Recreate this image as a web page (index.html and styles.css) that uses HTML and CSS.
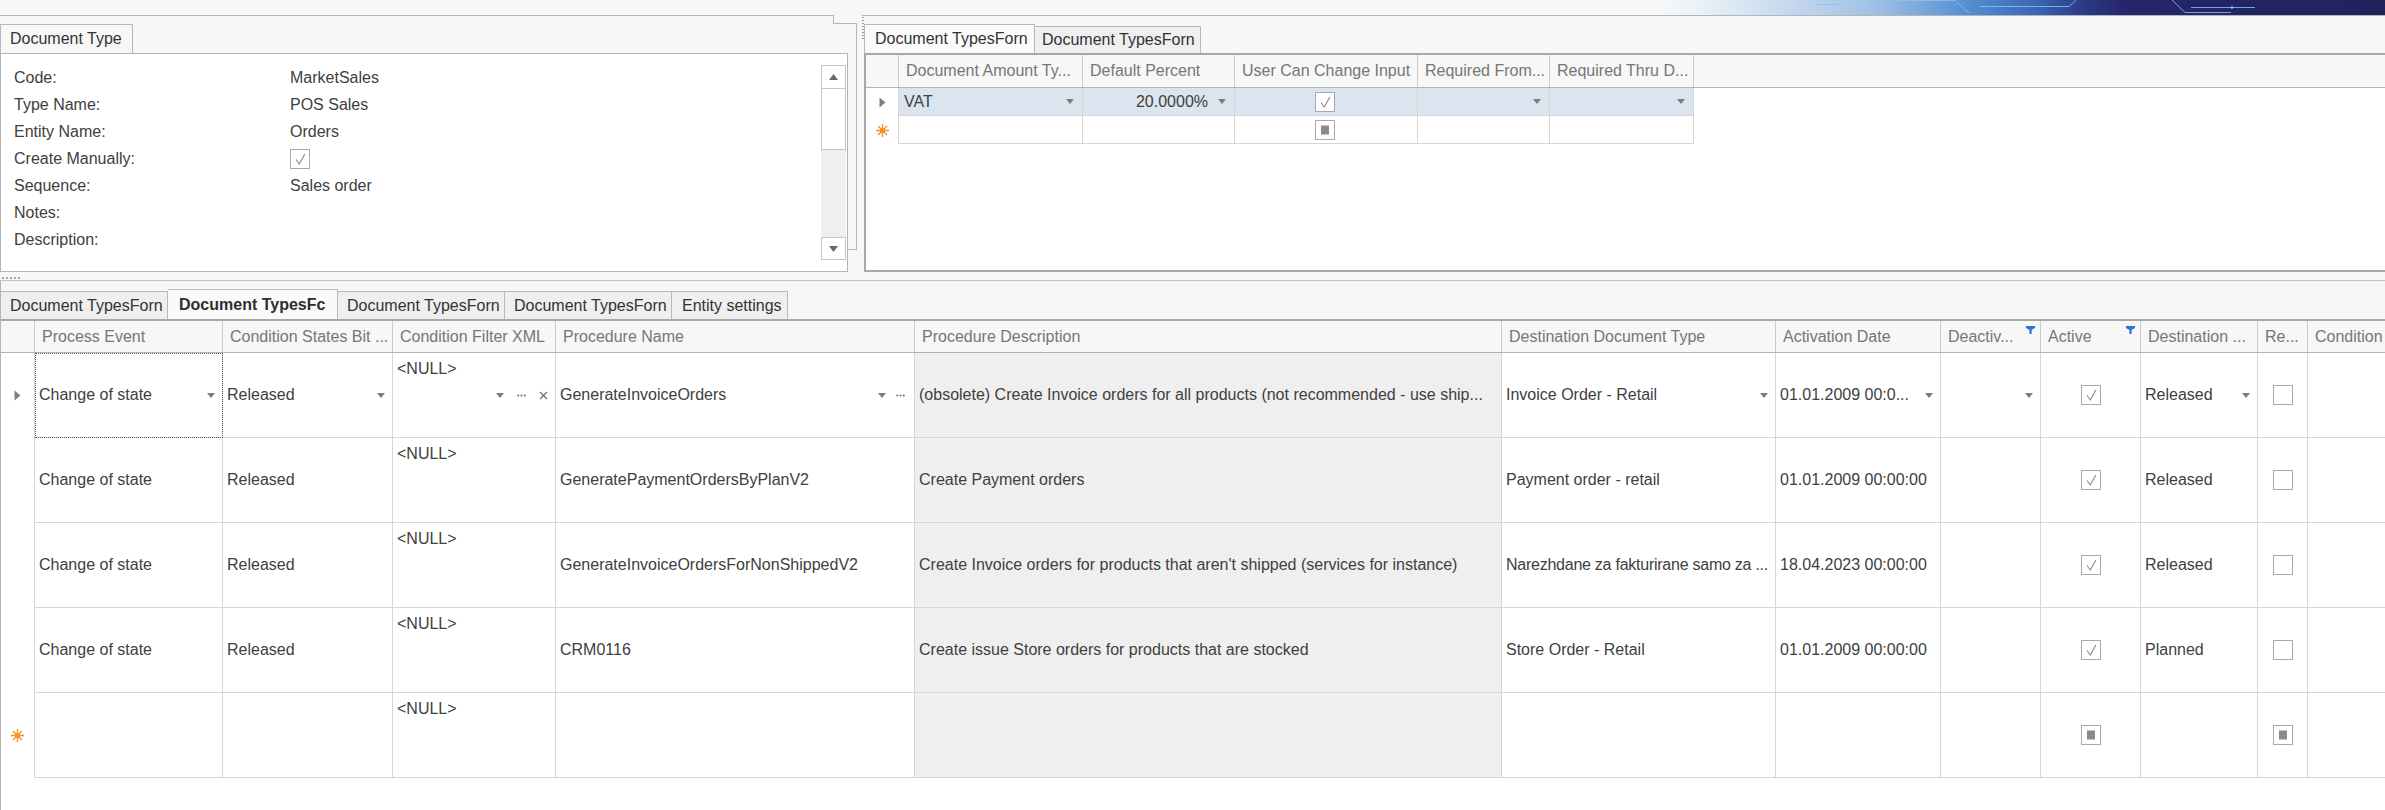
FILE: index.html
```html
<!DOCTYPE html>
<html>
<head>
<meta charset="utf-8">
<title>Document Type</title>
<link rel="stylesheet" href="styles.css">
</head>
<body>
<svg class="defs" width="0" height="0">
  <defs>
    <symbol id="dd" viewBox="0 0 8 5"><path d="M0 0H8L4 5Z" fill="#7d7d7d"/></symbol>
    <symbol id="dots" viewBox="0 0 9 3"><circle cx="1.2" cy="1.5" r="1" fill="#6a6a6a"/><circle cx="4.5" cy="1.5" r="1" fill="#6a6a6a"/><circle cx="7.8" cy="1.5" r="1" fill="#6a6a6a"/></symbol>
    <symbol id="xx" viewBox="0 0 9 9"><path d="M1 1L8 8M8 1L1 8" stroke="#6a6a6a" stroke-width="1.1" fill="none"/></symbol>
    <symbol id="chk" viewBox="0 0 20 20"><rect x="0.5" y="0.5" width="19" height="19" fill="#fff" stroke="#a9a9a9"/><path d="M6 10.5L9.3 15L14.8 5" fill="none" stroke="#8a8a8a" stroke-width="1.1"/></symbol>
    <symbol id="unchk" viewBox="0 0 20 20"><rect x="0.5" y="0.5" width="19" height="19" fill="#fff" stroke="#a9a9a9"/></symbol>
    <symbol id="ind" viewBox="0 0 20 20"><rect x="0.5" y="0.5" width="19" height="19" fill="#fff" stroke="#a9a9a9"/><rect x="6" y="5.5" width="8" height="9" fill="#8a8a8a"/></symbol>
    <symbol id="tri" viewBox="0 0 7 11"><path d="M0.5 0.5L6.5 5.5L0.5 10.5Z" fill="#808080"/></symbol>
    <symbol id="star" viewBox="0 0 13 13"><g stroke="#f5922a" stroke-width="1.4"><path d="M6.5 0V13M0 6.5H13M2 2L11 11M11 2L2 11"/></g><circle cx="6.5" cy="6.5" r="2.6" fill="#f5922a"/></symbol>
    <symbol id="funnel" viewBox="0 0 9 8"><path d="M0 0H9V2L5.6 4V8H3.4V4L0 2Z" fill="#2b78c9"/></symbol>
  </defs>
</svg>

<div class="topbar">
  <div class="topbar-fill"></div>
  <div class="banner">
    <svg width="727" height="15" viewBox="0 0 727 15">
      <defs>
        <linearGradient id="bgr" x1="0" x2="1" y1="0" y2="0">
          <stop offset="0" stop-color="#f7f7f7"/>
          <stop offset="0.06" stop-color="#eaf1f8"/>
          <stop offset="0.3" stop-color="#9fc0e4"/>
          <stop offset="0.42" stop-color="#5592d3"/>
          <stop offset="0.52" stop-color="#3b66b4"/>
          <stop offset="0.58" stop-color="#2b3d8a"/>
          <stop offset="0.64" stop-color="#25266b"/>
          <stop offset="1" stop-color="#21225c"/>
        </linearGradient>
      </defs>
      <rect width="727" height="15" fill="url(#bgr)"/>
      <g stroke="#8fc3f0" stroke-width="1" fill="none" opacity="0.8">
        <path d="M158 4.5H182"/>
        <path d="M236 0.5H297L311 13"/>
        <path d="M322 6.5H411L418 0"/>
        <path d="M514 0L527 12.5H573"/>
        <path d="M533 7.5H597"/>
      </g>
      <circle cx="574" cy="7.5" r="1.3" fill="#8fc3f0"/>
    </svg>
  </div>
</div>

<div class="top">
  <div class="lg">
    <div class="lg-head"><div class="lg-head-l"></div><div class="lg-head-r"></div></div>
    <div class="lg-body">
      <div class="lg-main">
        <div class="tabstrip lg-tabs"><div class="tab tab-doc">Document Type</div></div>
        <div class="form-page">
          <div class="form">
            <div class="frow"><span class="flabel">Code:</span><span class="fval">MarketSales</span></div>
            <div class="frow"><span class="flabel">Type Name:</span><span class="fval">POS Sales</span></div>
            <div class="frow"><span class="flabel">Entity Name:</span><span class="fval">Orders</span></div>
            <div class="frow"><span class="flabel">Create Manually:</span><span class="fval"><svg class="cb"><use href="#chk"/></svg></span></div>
            <div class="frow"><span class="flabel">Sequence:</span><span class="fval">Sales order</span></div>
            <div class="frow"><span class="flabel">Notes:</span><span class="fval"></span></div>
            <div class="frow"><span class="flabel">Description:</span><span class="fval"></span></div>
          </div>
          <div class="vscroll">
            <div class="sb-btn sb-up"><svg width="9" height="6" viewBox="0 0 9 6"><path d="M0 6H9L4.5 0Z" fill="#6a6a6a"/></svg></div>
            <div class="sb-thumb"></div>
            <div class="sb-track"></div>
            <div class="sb-btn sb-down"><svg width="9" height="6" viewBox="0 0 9 6"><path d="M0 0H9L4.5 6Z" fill="#6a6a6a"/></svg></div>
          </div>
        </div>
      </div>
      <div class="lg-edge"></div>
    </div>
  </div>

  <div class="vsplit"></div>

  <div class="rg">
    <div class="rg-grip"></div>
    <div class="rg-main">
      <div class="tabstrip rg-tabs">
        <div class="tab rg-tab1">Document TypesForn</div>
        <div class="tab rg-tab2">Document TypesForn</div>
      </div>
      <div class="rg-page">
        <div class="tg tg-head">
          <div></div>
          <div>Document Amount Ty...</div>
          <div>Default Percent</div>
          <div>User Can Change Input</div>
          <div>Required From...</div>
          <div>Required Thru D...</div>
          <div class="fill"></div>
        </div>
        <div class="tg tg-row sel">
          <div class="ind"><svg class="tri"><use href="#tri"/></svg></div>
          <div class="ed"><span class="txt">VAT</span><svg class="dd"><use href="#dd"/></svg></div>
          <div class="ed"><span class="txt right">20.0000%</span><svg class="dd"><use href="#dd"/></svg></div>
          <div class="center"><svg class="cb"><use href="#chk"/></svg></div>
          <div class="ed"><span class="txt"></span><svg class="dd"><use href="#dd"/></svg></div>
          <div class="ed"><span class="txt"></span><svg class="dd"><use href="#dd"/></svg></div>
          <div class="fill"></div>
        </div>
        <div class="tg tg-row">
          <div class="ind"><svg class="star"><use href="#star"/></svg></div>
          <div></div>
          <div></div>
          <div class="center"><svg class="cb"><use href="#ind"/></svg></div>
          <div></div>
          <div></div>
          <div class="fill"></div>
        </div>
      </div>
    </div>
  </div>
</div>

<div class="hsplit"><div class="grip-h"></div></div>

<div class="bottom">
  <div class="tabstrip btabs">
    <div class="tab btab bt1">Document TypesForn</div>
    <div class="tab btab bt2 active">Document TypesFc</div>
    <div class="tab btab bt3">Document TypesForn</div>
    <div class="tab btab bt4">Document TypesForn</div>
    <div class="tab btab bt5">Entity settings</div>
  </div>
  <div class="bpage">
    <div class="bg bg-head">
      <div></div>
      <div>Process Event</div>
      <div>Condition States Bit ...</div>
      <div>Condition Filter XML</div>
      <div>Procedure Name</div>
      <div>Procedure Description</div>
      <div>Destination Document Type</div>
      <div>Activation Date</div>
      <div><span class="htxt">Deactiv...</span><svg class="funnel"><use href="#funnel"/></svg></div>
      <div><span class="htxt">Active</span><svg class="funnel"><use href="#funnel"/></svg></div>
      <div>Destination ...</div>
      <div>Re...</div>
      <div>Condition</div>
    </div>

    <div class="bg bg-row">
      <div class="ind"><svg class="tri"><use href="#tri"/></svg></div>
      <div class="ed focus"><span class="txt">Change of state</span><svg class="dd"><use href="#dd"/></svg></div>
      <div class="ed"><span class="txt">Released</span><svg class="dd"><use href="#dd"/></svg></div>
      <div class="cfx"><span class="nul">&lt;NULL&gt;</span><span class="eds"><svg class="dd"><use href="#dd"/></svg><svg class="dots"><use href="#dots"/></svg><svg class="xx"><use href="#xx"/></svg></span></div>
      <div class="ed pn"><span class="txt">GenerateInvoiceOrders</span><svg class="dd"><use href="#dd"/></svg><svg class="dots"><use href="#dots"/></svg></div>
      <div class="pd">(obsolete) Create Invoice orders for all products (not recommended - use ship...</div>
      <div class="ed"><span class="txt">Invoice Order - Retail</span><svg class="dd"><use href="#dd"/></svg></div>
      <div class="ed"><span class="txt">01.01.2009 00:0...</span><svg class="dd"><use href="#dd"/></svg></div>
      <div class="ed"><span class="txt"></span><svg class="dd"><use href="#dd"/></svg></div>
      <div class="center"><svg class="cb"><use href="#chk"/></svg></div>
      <div class="ed"><span class="txt">Released</span><svg class="dd"><use href="#dd"/></svg></div>
      <div class="center"><svg class="cb"><use href="#unchk"/></svg></div>
      <div></div>
    </div>

    <div class="bg bg-row">
      <div class="ind"></div>
      <div>Change of state</div>
      <div>Released</div>
      <div class="nullc">&lt;NULL&gt;</div>
      <div>GeneratePaymentOrdersByPlanV2</div>
      <div class="pd">Create Payment orders</div>
      <div>Payment order - retail</div>
      <div>01.01.2009 00:00:00</div>
      <div></div>
      <div class="center"><svg class="cb"><use href="#chk"/></svg></div>
      <div>Released</div>
      <div class="center"><svg class="cb"><use href="#unchk"/></svg></div>
      <div></div>
    </div>

    <div class="bg bg-row">
      <div class="ind"></div>
      <div>Change of state</div>
      <div>Released</div>
      <div class="nullc">&lt;NULL&gt;</div>
      <div>GenerateInvoiceOrdersForNonShippedV2</div>
      <div class="pd">Create Invoice orders for products that aren't shipped (services for instance)</div>
      <div class="tight">Narezhdane za fakturirane samo za ...</div>
      <div>18.04.2023 00:00:00</div>
      <div></div>
      <div class="center"><svg class="cb"><use href="#chk"/></svg></div>
      <div>Released</div>
      <div class="center"><svg class="cb"><use href="#unchk"/></svg></div>
      <div></div>
    </div>

    <div class="bg bg-row">
      <div class="ind"></div>
      <div>Change of state</div>
      <div>Released</div>
      <div class="nullc">&lt;NULL&gt;</div>
      <div>CRM0116</div>
      <div class="pd">Create issue Store orders for products that are stocked</div>
      <div>Store Order - Retail</div>
      <div>01.01.2009 00:00:00</div>
      <div></div>
      <div class="center"><svg class="cb"><use href="#chk"/></svg></div>
      <div>Planned</div>
      <div class="center"><svg class="cb"><use href="#unchk"/></svg></div>
      <div></div>
    </div>

    <div class="bg bg-row">
      <div class="ind"><svg class="star"><use href="#star"/></svg></div>
      <div></div>
      <div></div>
      <div class="nullc">&lt;NULL&gt;</div>
      <div></div>
      <div class="pd"></div>
      <div></div>
      <div></div>
      <div></div>
      <div class="center"><svg class="cb"><use href="#ind"/></svg></div>
      <div></div>
      <div class="center"><svg class="cb"><use href="#ind"/></svg></div>
      <div></div>
    </div>
  </div>
</div>
</body>
</html>
```
FILE: styles.css
```css
* { box-sizing: border-box; }
html, body { margin: 0; padding: 0; }
body {
  width: 2385px;
  height: 810px;
  overflow: hidden;
  background: #f7f7f7;
  font-family: "Liberation Sans", Arial, sans-serif;
  font-size: 16px;
  line-height: 18px;
  color: #404040;
}
svg { display: block; flex: none; }
.defs { position: absolute; width: 0; height: 0; overflow: hidden; }

/* top banner strip */
.topbar { display: flex; height: 15px; }
.topbar-fill { flex: 1; }
.banner { width: 727px; height: 15px; }

/* top area */
.top { display: flex; height: 257px; }

.lg { width: 857px; display: flex; flex-direction: column; }
.lg-head { display: flex; height: 9px; flex: none; }
.lg-head-l { width: 834px; border-top: 1px solid #b5b5b5; border-right: 1px solid #b5b5b5; }
.lg-head-r { flex: 1; border-bottom: 1px solid #b5b5b5; }
.lg-body { display: flex; flex: 1; }
.lg-main { width: 848px; display: flex; flex-direction: column; }
.lg-edge { width: 9px; height: 226px; border-right: 1px solid #b5b5b5; border-bottom: 1px solid #b5b5b5; }

.tabstrip { display: flex; align-items: flex-end; flex: none; }
.tab {
  display: flex;
  align-items: center;
  white-space: nowrap;
  overflow: hidden;
  border: 1px solid #b8b8b8;
  border-bottom: none;
  color: #333;
}
.lg-tabs { height: 29px; }
.tab-doc { width: 133px; height: 29px; background: #f7f7f7; padding-left: 9px; }

.form-page { flex: 1; display: flex; background: #fff; border: 1px solid #b5b5b5; }
.form { flex: 1; padding: 10px 0 0 13px; }
.frow { display: flex; align-items: center; height: 27px; }
.flabel { width: 276px; flex: none; }
.fval { display: flex; align-items: center; }
.cb { width: 20px; height: 20px; }

.vscroll { width: 25px; margin: 11px 1px 11px 0; display: flex; flex-direction: column; }
.sb-btn { height: 24px; border: 1px solid #c6c6c6; background: #fff; display: flex; align-items: center; justify-content: center; flex: none; }
.sb-thumb { height: 61px; border: 1px solid #c6c6c6; border-top: none; background: #fff; flex: none; }
.sb-track { flex: 1; background: #efefef; }
.sb-down { height: 23px; }

/* right group */
.vsplit { width: 5px; flex: none; }
.rg { flex: 1; display: flex; border-top: 1px solid #b5b5b5; min-width: 0; }
.rg-grip {
  width: 2px;
  height: 23px;
  flex: none;
  background: radial-gradient(circle, #9a9a9a 0.9px, transparent 1.1px) 0 0 / 2px 3px repeat-y;
}
.rg-main { flex: 1; display: flex; flex-direction: column; padding-top: 8px; min-width: 0; }
.rg-tabs { height: 29px; }
.rg-tab1 { width: 171px; height: 29px; background: #fafafa; padding-left: 10px; }
.rg-tab2 { width: 166px; height: 27px; background: #efefef; border-left: none; padding-left: 7px; }
.rg-page {
  flex: 1;
  background: #fff;
  border-top: 2px solid #a8a8a8;
  border-left: 2px solid #a8a8a8;
  border-bottom: 2px solid #a8a8a8;
  overflow: hidden;
}

.tg { display: grid; grid-template-columns: 33px 184px 152px 183px 132px 144px 1fr; }
.tg-head { height: 33px; background: #f7f7f7; border-bottom: 1px solid #b3b3b3; }
.tg-head > div {
  border-right: 1px solid #cbcbcb;
  display: flex;
  align-items: center;
  padding-left: 7px;
  color: #767676;
  white-space: nowrap;
  overflow: hidden;
}
.tg-head > .fill { border-right: none; }
.tg-row { height: 28px; }
.tg-row > div {
  border-right: 1px solid #d6d6d6;
  border-bottom: 1px solid #d6d6d6;
  display: flex;
  align-items: center;
  padding: 0 8px 0 5px;
  white-space: nowrap;
  overflow: hidden;
}
.tg-row > .ind { border-bottom: none; justify-content: center; padding: 0; }
.tg-row > .fill { border: none; }
.tg-row.sel > div:not(.ind):not(.fill) { background: #dae5ef; }

.ed .txt { flex: 1; overflow: hidden; white-space: nowrap; }
.ed .txt.right { text-align: right; padding-right: 10px; }
.dd { width: 8px; height: 5px; }
.dots { width: 9px; height: 3px; }
.xx { width: 9px; height: 9px; }
.tri { width: 7px; height: 11px; }
.star { width: 13px; height: 13px; }
.funnel { width: 9px; height: 8px; }
.center { justify-content: center; }

/* splitter */
.hsplit { height: 8px; display: flex; align-items: flex-end; padding: 0 0 1px 1px; }
.grip-h {
  width: 20px;
  height: 2px;
  background: radial-gradient(circle, #a8a8a8 0.9px, transparent 1.1px) 0 0 / 4px 2px repeat-x;
}

/* bottom group */
.bottom {
  border-top: 1px solid #c3c3c3;
  border-left: 1px solid #b5b5b5;
  padding-top: 8px;
  height: 530px;
  display: flex;
  flex-direction: column;
}
.btabs { height: 30px; }
.btab { height: 28px; background: #efefef; border-left: none; }
.btab.active { height: 30px; background: #fafafa; font-weight: bold; color: #2e2e2e; }
.bt1 { width: 167px; padding-left: 9px; }
.bt2 { width: 170px; padding-left: 11px; }
.bt3 { width: 167px; padding-left: 9px; }
.bt4 { width: 167px; padding-left: 9px; }
.bt5 { width: 116px; padding-left: 10px; }

.bpage { flex: 1; background: #fff; border-top: 2px solid #a8a8a8; overflow: hidden; }

.bg {
  display: grid;
  grid-template-columns: 34px 188px 170px 163px 359px 587px 274px 165px 100px 100px 117px 50px 150px;
  width: 2457px;
}
.bg-head { height: 32px; background: #f7f7f7; border-bottom: 1px solid #b3b3b3; }
.bg-head > div {
  border-right: 1px solid #cbcbcb;
  display: flex;
  align-items: center;
  padding-left: 7px;
  color: #767676;
  white-space: nowrap;
  overflow: hidden;
}
.bg-head .htxt { flex: 1; }
.bg-head .funnel { align-self: flex-start; margin: 5px 5px 0 0; }

.bg-row { height: 85px; }
.bg-row > div {
  border-right: 1px solid #d6d6d6;
  border-bottom: 1px solid #d6d6d6;
  display: flex;
  align-items: center;
  padding: 0 7px 0 4px;
  white-space: nowrap;
  overflow: hidden;
}
.bg-row > .ind { border-bottom: none; justify-content: center; padding: 0; }
.bg-row > .pd { background: #efefef; }
.bg-row > .nullc { align-items: flex-start; padding-top: 7px; }
.bg-row > .center { justify-content: center; padding: 0; }
.bg-row > .focus { outline: 1px dotted #5a5a5a; outline-offset: -1px; }
.bg-row > .pn { gap: 10px; padding-right: 9px; }
.bg-row > .tight { padding-right: 0; letter-spacing: -0.25px; }

.bg-row > .cfx {
  display: grid;
  grid-template-columns: 1fr;
  grid-template-rows: 1fr;
  padding: 0 7px 0 4px;
}
.cfx > .nul { grid-area: 1 / 1; align-self: start; padding-top: 7px; }
.cfx > .eds { grid-area: 1 / 1; align-self: center; justify-self: end; display: flex; align-items: center; gap: 13px; }
```
